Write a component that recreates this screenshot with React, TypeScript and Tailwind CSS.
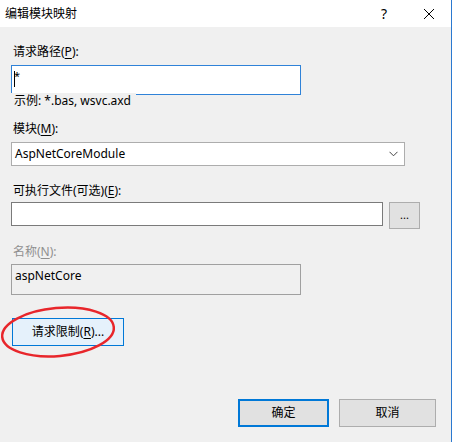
import React from "react";

const font = { fontFamily: '"Noto Sans", "Noto Sans CJK SC", sans-serif' };

function U({ c }: { c: string }) {
  return <span className="underline underline-offset-2 decoration-1">{c}</span>;
}

export default function App() {
  return (
    <div
      className="w-[452px] h-[442px] bg-[#f0f0f0] text-black text-[12px] leading-[16px] flex flex-col border-r border-[#2b79d0] relative overflow-hidden"
      style={font}
    >
      {/* Title bar */}
      <div className="h-[27px] bg-white flex items-center pl-[5px] shrink-0">
        <span className="text-[12px]">编辑模块映射</span>
        <span className="ml-auto w-[14px] text-center text-[14px] mr-[32px]">?</span>
        <svg width="12" height="12" viewBox="0 0 12 12" className="mr-[16px]">
          <path d="M1 1 L11 11 M11 1 L1 11" stroke="#000" strokeWidth="1" fill="none" />
        </svg>
      </div>

      <div className="flex flex-col pl-[11px]">
        <div className="mt-[17px] pl-[2px]">
          请求路径(<U c="P" />):
        </div>
        <div className="mt-[5px] w-[290px] h-[30px] bg-white border border-[#2f82d8] flex items-start pl-[2px] pt-[4px]">
          <span className="w-px h-[16px] bg-black mt-[1px]" />
          <span className="text-[11px] leading-[12px] -ml-px">*</span>
        </div>
        <div className="-mt-[2px] w-fit bg-[#f0f0f0] pl-[3px] pr-[5px] relative">示例: *.bas, wsvc.axd</div>

        <div className="mt-[12px] pl-[2px]">
          模块(<U c="M" />):
        </div>
        <div className="mt-[5px] w-[394px] h-[24px] bg-white border border-[#adadad] flex items-center pl-[3px] pr-[6px]">
          <span className="text-[12px]">AspNetCoreModule</span>
          <svg width="9" height="6" viewBox="0 0 9 6" className="ml-auto">
            <path d="M0.5 0.8 L4.5 4.8 L8.5 0.8" stroke="#444" strokeWidth="1" fill="none" />
          </svg>
        </div>

        <div className="mt-[17px] pl-[2px]">
          可执行文件(可选)(<U c="E" />):
        </div>
        <div className="mt-[3px] flex items-start">
          <div className="w-[372px] h-[24px] bg-white border border-[#7a7a7a]" />
          <div className="ml-[6px] w-[31px] h-[27px] bg-[#e1e1e1] border border-[#adadad] flex items-center justify-center text-[11px] leading-none pb-[2px]">
            ...
          </div>
        </div>

        <div className="mt-[15px] pl-[2px] text-[#8f8f8f]">
          名称(<U c="N" />):
        </div>
        <div className="mt-[4px] w-[290px] h-[31px] border border-[#a0a0a0] bg-[#f0f0f0] pl-[3px] pt-[3px]">
          aspNetCore
        </div>

        <div className="mt-[23px] ml-[1px] w-[112px] h-[28px] bg-[#e5f1fb] border border-[#0078d7] flex items-center justify-center">
          请求限制(<U c="R" />)...
        </div>

        <div className="mt-[53px] flex pl-[227px]">
          <div className="w-[91px] h-[28px] bg-[#e1e1e1] border-2 border-[#0078d7] flex items-center justify-center">
            确定
          </div>
          <div className="ml-[10px] w-[97px] h-[28px] bg-[#e1e1e1] border border-[#adadad] flex items-center justify-center">
            取消
          </div>
        </div>
      </div>

      {/* red annotation ellipse */}
      <svg
        className="absolute left-0 top-[300px] pointer-events-none"
        width="130"
        height="66"
        viewBox="0 0 130 66"
      >
        <ellipse
          cx="58"
          cy="32"
          rx="56"
          ry="24"
          transform="rotate(-5 58 32)"
          fill="none"
          stroke="#e8262b"
          strokeWidth="2.5"
        />
      </svg>
    </div>
  );
}
